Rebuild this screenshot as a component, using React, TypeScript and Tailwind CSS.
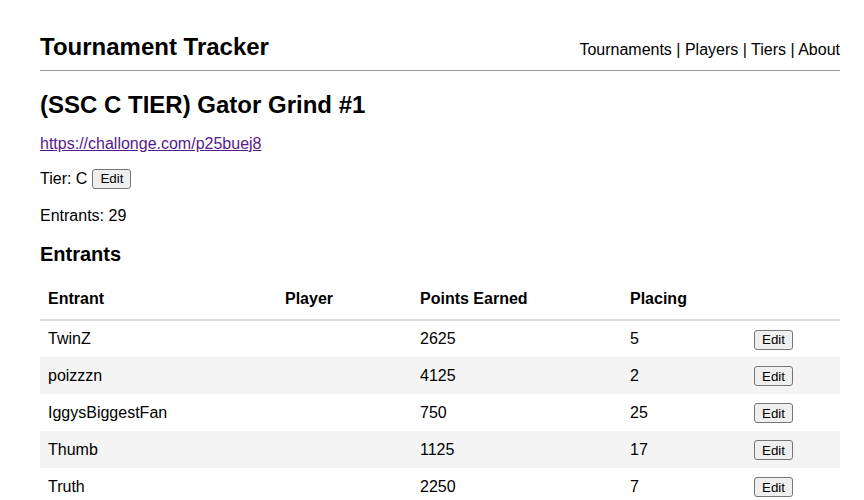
const rows = [
  { entrant: 'TwinZ', player: '', points: 2625, placing: 5 },
  { entrant: 'poizzzn', player: '', points: 4125, placing: 2 },
  { entrant: 'IggysBiggestFan', player: '', points: 750, placing: 25 },
  { entrant: 'Thumb', player: '', points: 1125, placing: 17 },
  { entrant: 'Truth', player: '', points: 2250, placing: 7 },
]

function EditButton() {
  return (
    <button className="h-[20px] px-[7px] text-[13.33px] leading-none text-black bg-[#efefef] border border-[#767676] rounded-[3px]">
      Edit
    </button>
  )
}

export default function App() {
  return (
    <div className="w-[800px] mx-[40px] pt-[33px] text-[16px] text-black font-['Liberation_Sans',Arial,sans-serif]">
      <header className="flex items-end justify-between pb-[9px] border-b border-[#999]">
        <h1 className="text-[24px] font-bold leading-[28px]">Tournament Tracker</h1>
        <nav className="leading-[18px] pb-[2px]">
          <a href="#">Tournaments</a> | <a href="#">Players</a> | <a href="#">Tiers</a> |{' '}
          <a href="#">About</a>
        </nav>
      </header>

      <h2 className="mt-[20px] text-[24px] font-bold leading-[28px]">(SSC C TIER) Gator Grind #1</h2>
      <p className="mt-[16px] leading-[18px]">
        <a href="#" className="underline text-[#551a8b]">https://challonge.com/p25buej8</a>
      </p>
      <p className="mt-[16px] leading-[20px] flex items-center gap-[5px]">
        Tier: C <EditButton />
      </p>
      <p className="mt-[18px] leading-[18px]">Entrants: 29</p>

      <h3 className="mt-[18px] text-[20px] font-bold leading-[22px]">Entrants</h3>

      <table className="mt-[14px] w-full border-collapse text-left">
        <thead>
          <tr className="border-b-2 border-[#ddd]">
            <th className="w-[237px] px-[8px] py-[8px] font-bold">Entrant</th>
            <th className="w-[135px] px-[8px] py-[8px] font-bold">Player</th>
            <th className="w-[210px] px-[8px] py-[8px] font-bold">Points Earned</th>
            <th className="w-[124px] px-[8px] py-[8px] font-bold">Placing</th>
            <th className="px-[8px] py-[8px]"></th>
          </tr>
        </thead>
        <tbody>
          {rows.map((r, i) => (
            <tr key={r.entrant} className={i % 2 === 1 ? 'bg-[#f4f4f4]' : ''}>
              <td className="px-[8px] h-[37px]">{r.entrant}</td>
              <td className="px-[8px] h-[37px]">{r.player}</td>
              <td className="px-[8px] h-[37px]">{r.points}</td>
              <td className="px-[8px] h-[37px]">{r.placing}</td>
              <td className="px-[8px] h-[37px]">
                <EditButton />
              </td>
            </tr>
          ))}
        </tbody>
      </table>
    </div>
  )
}
